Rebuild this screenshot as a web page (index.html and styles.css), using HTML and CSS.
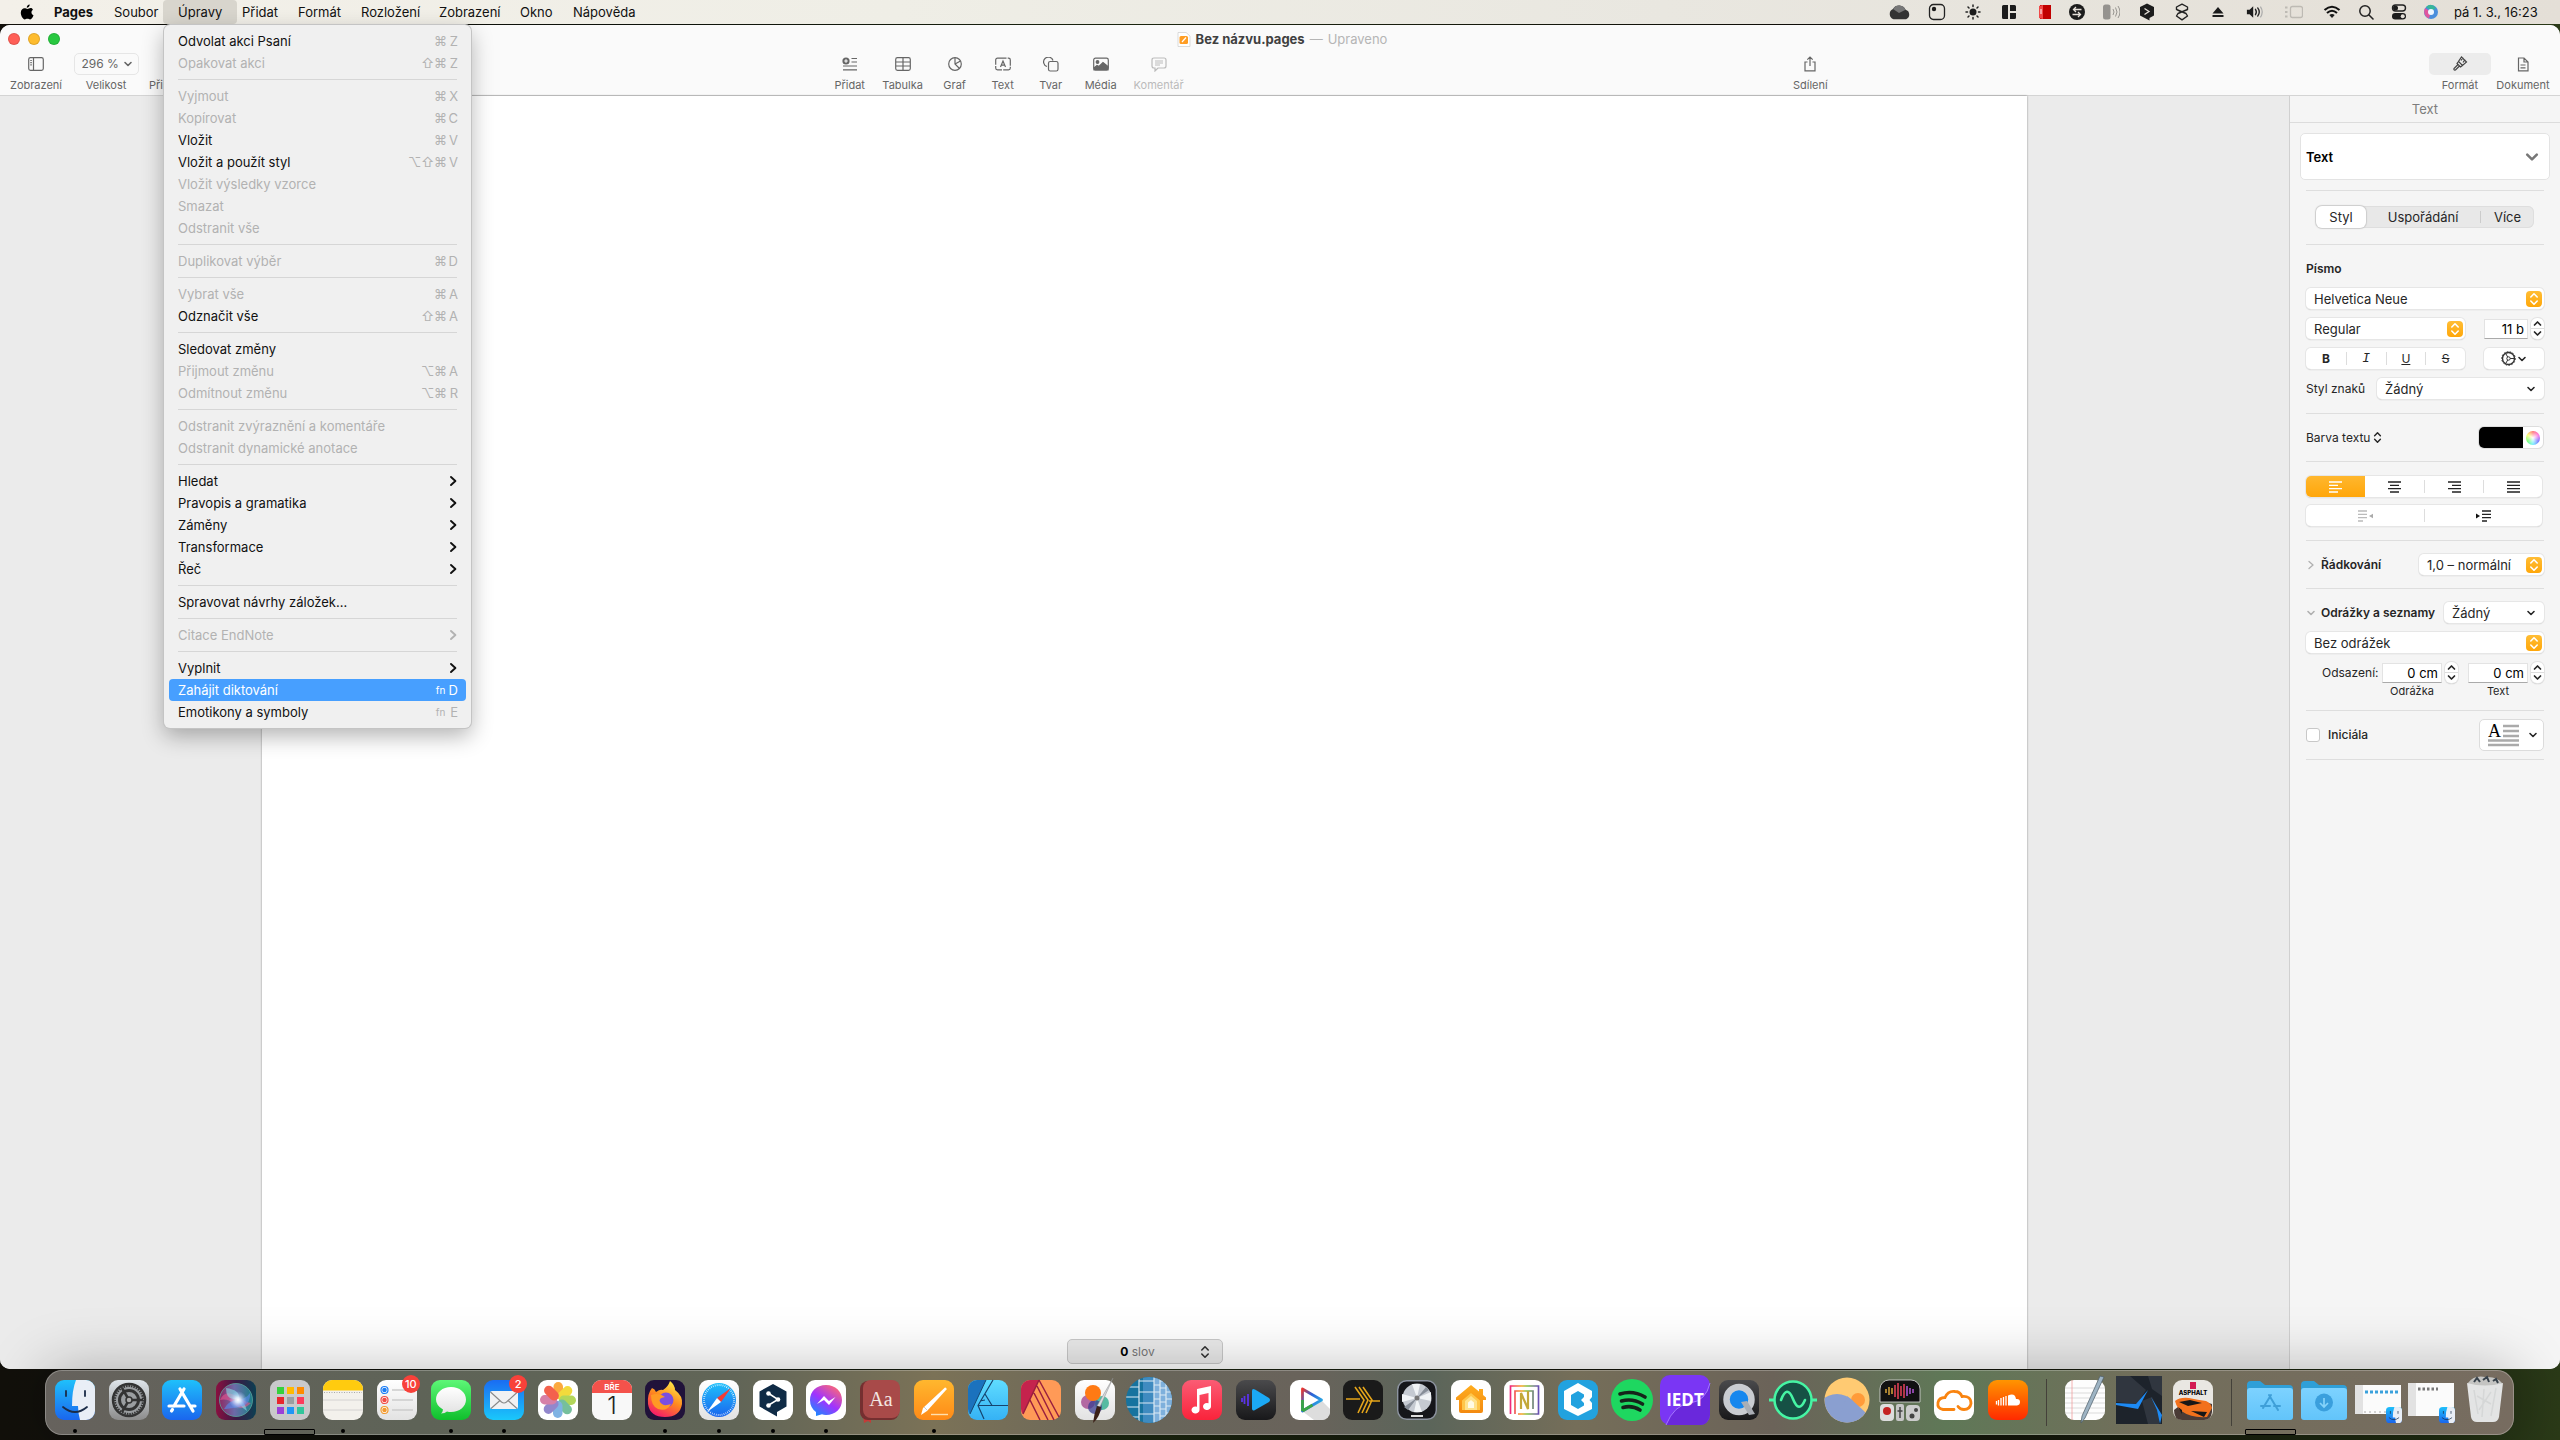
FILE: index.html
```html
<!DOCTYPE html>
<html lang="cs">
<head>
<meta charset="utf-8">
<title>Bez názvu.pages</title>
<link rel="stylesheet" href="styles.css">
</head>
<body>
<svg class="defs" aria-hidden="true">
  <defs>
    <linearGradient id="blue" x1="0" y1="0" x2="0" y2="1"><stop offset="0" stop-color="#1fc0fb"/><stop offset="1" stop-color="#1a66ee"/></linearGradient>
    <linearGradient id="blueUp" x1="0" y1="0" x2="0" y2="1"><stop offset="0" stop-color="#1a6cf2"/><stop offset="1" stop-color="#1ac8fb"/></linearGradient>
    <linearGradient id="silver" x1="0" y1="0" x2="0" y2="1"><stop offset="0" stop-color="#dfe5ea"/><stop offset="1" stop-color="#8c8c8c"/></linearGradient>
    <linearGradient id="white" x1="0" y1="0" x2="0" y2="1"><stop offset="0" stop-color="#fff"/><stop offset="1" stop-color="#e2e2e2"/></linearGradient>
    <linearGradient id="green" x1="0" y1="0" x2="0" y2="1"><stop offset="0" stop-color="#5df777"/><stop offset="1" stop-color="#0fbf2c"/></linearGradient>
    <linearGradient id="red" x1="0" y1="0" x2="0" y2="1"><stop offset="0" stop-color="#fb5c74"/><stop offset="1" stop-color="#fa233b"/></linearGradient>
    <linearGradient id="orange" x1="0" y1="0" x2="0" y2="1"><stop offset="0" stop-color="#ffb72e"/><stop offset="1" stop-color="#ff8a17"/></linearGradient>
    <linearGradient id="cloudOrange" x1="0" y1="0" x2="0" y2="1"><stop offset="0" stop-color="#ff9500"/><stop offset="1" stop-color="#ff2a00"/></linearGradient>
    <linearGradient id="dark" x1="0" y1="0" x2="0" y2="1"><stop offset="0" stop-color="#4a4a4c"/><stop offset="1" stop-color="#18181a"/></linearGradient>
    <linearGradient id="messenger" x1=".1" y1="1" x2=".8" y2="0"><stop offset="0" stop-color="#0a93ff"/><stop offset=".5" stop-color="#a033ff"/><stop offset="1" stop-color="#ff6a72"/></linearGradient>
    <linearGradient id="fire" x1=".8" y1="0" x2=".3" y2="1"><stop offset="0" stop-color="#fff04a"/><stop offset=".5" stop-color="#ff8a1e"/><stop offset="1" stop-color="#f5196b"/></linearGradient>
    <linearGradient id="rainbow" x1="0" y1="0" x2="1" y2="0"><stop offset="0" stop-color="#f0297c"/><stop offset=".4" stop-color="#f5a623"/><stop offset=".6" stop-color="#7dc242"/><stop offset="1" stop-color="#6a52b3"/></linearGradient>
    <linearGradient id="play" x1="0" y1="0" x2="1" y2=".8"><stop offset="0" stop-color="#e8352e"/><stop offset=".4" stop-color="#2c5fd6"/><stop offset="1" stop-color="#28b7e8"/></linearGradient>
    <linearGradient id="folder" x1="0" y1="0" x2="0" y2="1"><stop offset="0" stop-color="#7dd2ff"/><stop offset="1" stop-color="#62c4fa"/></linearGradient>
    <linearGradient id="affinity" x1="0" y1="0" x2="0" y2="1"><stop offset="0" stop-color="#5fdcff"/><stop offset="1" stop-color="#35b2f5"/></linearGradient>
    <linearGradient id="home" x1="0" y1="0" x2="0" y2="1"><stop offset="0" stop-color="#ffad1f"/><stop offset="1" stop-color="#f38a10"/></linearGradient>
    <radialGradient id="siriGlow" cx=".5" cy=".5" r=".5"><stop offset="0" stop-color="#fff"/><stop offset=".3" stop-color="#e6f4ff" stop-opacity=".85"/><stop offset="1" stop-color="#9fc6ff" stop-opacity="0"/></radialGradient>
    <linearGradient id="siri"><stop offset="0" stop-color="#8e2a64"/><stop offset=".45" stop-color="#6c6aa8"/><stop offset="1" stop-color="#1c7f88"/></linearGradient>
    <linearGradient id="siriBack"><stop offset="0" stop-color="#8a1040"/><stop offset=".5" stop-color="#3b1945"/><stop offset="1" stop-color="#0b3f52"/></linearGradient>
    <symbol id="tile" viewBox="0 0 40 40"><rect width="40" height="40" rx="9"/></symbol>
    <symbol id="down" viewBox="0 0 10 10"><path d="M2 3.500 5 6.500 8 3.500" fill="none" stroke="currentColor" stroke-width="1.600" stroke-linecap="round" stroke-linejoin="round"/></symbol>
    <symbol id="updown" viewBox="0 0 10 14"><path d="M1.800 5 5 1.800 8.200 5M1.800 9 5 12.200 8.200 9" fill="none" stroke="currentColor" stroke-width="1.600" stroke-linecap="round" stroke-linejoin="round"/></symbol>
    <symbol id="steps" viewBox="0 0 9 17"><path d="M1.500 5 4.500 2 7.500 5M1.500 12l3 3 3-3" fill="none" stroke="currentColor" stroke-width="1.700" stroke-linecap="round" stroke-linejoin="round"/></symbol>
    <symbol id="next" viewBox="0 0 10 12"><path d="M3 2 7.400 6 3 10" fill="none" stroke="currentColor" stroke-width="1.900" stroke-linecap="round" stroke-linejoin="round"/></symbol>
    <symbol id="thin" viewBox="0 0 10 12"><path d="M3 2.500 7 6 3 9.500" fill="none" stroke="currentColor" stroke-width="1.300" stroke-linecap="round" stroke-linejoin="round"/></symbol>
    <symbol id="finder" viewBox="0 0 40 40"><rect width="40" height="40" rx="9" fill="url(#blue)"/><path d="M21 0h10a9 9 0 0 1 9 9v22a9 9 0 0 1-9 9h-6q-2-7-2-14h-6q0-16 4-26z" fill="#e9eef6"/><path d="M11 11v5M30 11v5M8 27q12 10 24 0" fill="none" stroke="#1b2c48" stroke-width="1.800" stroke-linecap="round"/></symbol>
  </defs>
</svg>

<header class="menubar">
  <nav class="menus" aria-label="Hlavní menu">
    <button class="apple" aria-label="Apple"><svg width="14" height="17" viewBox="0 0 14 17"><path d="M9.700.5c.1 1.600-1.300 3.200-2.900 3.200C6.600 2.200 8.100.6 9.700.5zM12.900 5.800c-2.200 1.500-1.700 4.500.6 5.500-.6 1.800-1.900 4.100-3.400 4.100-1 0-1.400-.6-2.700-.6s-1.700.6-2.600.6C3 15.400.8 11.800.8 8.800c0-3 1.900-4.600 3.700-4.600 1.200 0 2 .7 3 .7.800 0 1.800-.8 3.200-.8 1 0 1.800.6 2.200 1.700z"/></svg></button>
    <button class="app">Pages</button>
    <button>Soubor</button>
    <div class="opened">
      <button aria-expanded="true">Úpravy</button>
      <ul class="menu">
        <li><button>Odvolat akci Psaní<kbd><i>⌘</i><b>Z</b></kbd></button></li>
        <li><button disabled>Opakovat akci<kbd><i>⇧</i><i>⌘</i><b>Z</b></kbd></button></li>
        <li class="rule"></li>
        <li><button disabled>Vyjmout<kbd><i>⌘</i><b>X</b></kbd></button></li>
        <li><button disabled>Kopírovat<kbd><i>⌘</i><b>C</b></kbd></button></li>
        <li><button>Vložit<kbd><i>⌘</i><b>V</b></kbd></button></li>
        <li><button>Vložit a použít styl<kbd><i>⌥</i><i>⇧</i><i>⌘</i><b>V</b></kbd></button></li>
        <li><button disabled>Vložit výsledky vzorce</button></li>
        <li><button disabled>Smazat</button></li>
        <li><button disabled>Odstranit vše</button></li>
        <li class="rule"></li>
        <li><button disabled>Duplikovat výběr<kbd><i>⌘</i><b>D</b></kbd></button></li>
        <li class="rule"></li>
        <li><button disabled>Vybrat vše<kbd><i>⌘</i><b>A</b></kbd></button></li>
        <li><button>Odznačit vše<kbd><i>⇧</i><i>⌘</i><b>A</b></kbd></button></li>
        <li class="rule"></li>
        <li><button>Sledovat změny</button></li>
        <li><button disabled>Přijmout změnu<kbd><i>⌥</i><i>⌘</i><b>A</b></kbd></button></li>
        <li><button disabled>Odmítnout změnu<kbd><i>⌥</i><i>⌘</i><b>R</b></kbd></button></li>
        <li class="rule"></li>
        <li><button disabled>Odstranit zvýraznění a komentáře</button></li>
        <li><button disabled>Odstranit dynamické anotace</button></li>
        <li class="rule"></li>
        <li><button>Hledat<svg><use href="#next"/></svg></button></li>
        <li><button>Pravopis a gramatika<svg><use href="#next"/></svg></button></li>
        <li><button>Záměny<svg><use href="#next"/></svg></button></li>
        <li><button>Transformace<svg><use href="#next"/></svg></button></li>
        <li><button>Řeč<svg><use href="#next"/></svg></button></li>
        <li class="rule"></li>
        <li><button>Spravovat návrhy záložek…</button></li>
        <li class="rule"></li>
        <li><button disabled>Citace EndNote<svg><use href="#next"/></svg></button></li>
        <li class="rule"></li>
        <li><button>Vyplnit<svg><use href="#next"/></svg></button></li>
        <li><button class="active">Zahájit diktování<kbd class="fn"><i>fn</i><b>D</b></kbd></button></li>
        <li><button>Emotikony a symboly<kbd class="fn"><i>fn</i><b>E</b></kbd></button></li>
      </ul>
    </div>
    <button>Přidat</button>
    <button>Formát</button>
    <button>Rozložení</button>
    <button>Zobrazení</button>
    <button>Okno</button>
    <button>Nápověda</button>
  </nav>
  <div class="status">
    <svg viewBox="0 0 20 16"><path d="M5 14.500a5 5 0 0 1-.5-9.300A6.500 6.500 0 0 1 16 6a4.500 4.500 0 0 1 .5 8.500z" fill="#333"/><path d="M4.500 5.200A6.500 6.500 0 0 1 16 6l-6 3z" fill="#777"/></svg>
    <svg viewBox="0 0 18 18"><rect x="1.500" y="1.500" width="15" height="15" rx="4" fill="none" stroke="#222" stroke-width="1.300"/><circle cx="6" cy="6" r="2.200"/></svg>
    <svg viewBox="0 0 18 18"><circle cx="9" cy="9" r="3.500"/><path d="M9 2v1.500M9 14.500V16M2 9h1.500M14.500 9H16M4 4l1 1M13 13l1 1M4 14l1-1M13 5l1-1" stroke="#222" stroke-width="1.500" stroke-linecap="round"/></svg>
    <svg viewBox="0 0 18 18"><path d="M3.500 2H8v14H3.500A1.500 1.500 0 0 1 2 14.500v-11A1.500 1.500 0 0 1 3.500 2zM10 2h4.500A1.500 1.500 0 0 1 16 3.500V8h-6zM10 10h6v4.500a1.500 1.500 0 0 1-1.500 1.500H10z"/></svg>
    <svg viewBox="0 0 18 18"><path d="M4 2h11v14H4z" fill="#c10000"/><path d="M3 3l4-1v14l-4-1z" fill="#f04848"/><path d="M5 6v5" stroke="#fff"/></svg>
    <svg viewBox="0 0 18 18"><circle cx="9" cy="9" r="8"/><path d="M13.500 6.500H5.500m2.500-2.500-2.500 2.500 2.500 2.500M4.500 11.500h8m-2.500-2.500 2.500 2.500-2.500 2.500" stroke="#e5e0d9" fill="none" stroke-width="1.300"/></svg>
    <svg viewBox="0 0 18 18" class="dim"><rect x="1" y="1.500" width="7.500" height="15" rx="2.500"/><path d="M11 6q2 3 0 6M13.500 4.500q3 4.500 0 9M16 3q4 6 0 12" fill="none" stroke="#222"/></svg>
    <svg viewBox="0 0 18 18"><path d="M9 .5 16 4v8.500L11.500 15v2.500L2 12.500V4z"/><path d="M6.500 5.500 11 8.500 6.500 11.500" fill="none" stroke="#e5e0d9" stroke-width="1.300"/></svg>
    <svg viewBox="0 0 18 18"><path d="M9 9.500 3.500 6.500V4L9 1.200 14.500 4v2.500L5 10.500 3.500 13 9 16.800 14.500 13 13 10.500 3.500 6.500" fill="none" stroke="#222" stroke-width="1.400" stroke-linejoin="round"/></svg>
    <svg viewBox="0 0 18 18"><path d="M9 4 14.500 10.500h-11zM3.500 12h11v2h-11z"/></svg>
    <svg viewBox="0 0 20 18"><path d="M1 6.500h3l4-4v13l-4-4H1z"/><path d="M10.500 6q2 3 0 6M13 4.500q3.500 4.500 0 9" fill="none" stroke="#222" stroke-width="1.500" stroke-linecap="round"/><path d="M16 3q4 6 0 12" fill="none" stroke="#aaa" stroke-width="1.300"/></svg>
    <svg viewBox="0 0 18 18" class="faint"><rect x="5.500" y="3.500" width="12" height="11" rx="2" fill="none" stroke="#222" stroke-width="1.300"/><path d="M0 4.500h2.500M0 9h2.500M0 13.500h2.500" stroke="#222" stroke-width="2"/></svg>
    <svg viewBox="0 0 18 16"><path d="M1.500 6q7.500-6.500 15 0M4 9q5-4.500 10 0" fill="none" stroke="#111" stroke-width="2.100"/><path d="M6.300 11q2.700-2.200 5.400 0L9 14z"/></svg>
    <svg viewBox="0 0 18 18"><circle cx="8" cy="8" r="5.200" fill="none" stroke="#222" stroke-width="1.500"/><path d="m12 12 4 4" stroke="#222" stroke-width="1.600" stroke-linecap="round"/></svg>
    <svg viewBox="0 0 18 18"><rect x="2.500" y="2" width="13" height="6" rx="3" fill="none" stroke="#222" stroke-width="1.400"/><circle cx="5.500" cy="5" r="2.500"/><rect x="2" y="10" width="14" height="6.500" rx="3.200"/><circle cx="12.700" cy="13.200" r="2" fill="#e5e0d9"/></svg>
    <svg viewBox="0 0 18 18"><circle cx="9" cy="9" r="7" fill="#4b8edc"/><path d="M4 4q5-5 10 1l-4 3z" fill="#37b69a"/><path d="M3 5q-3 7 4 10.500L9 9z" fill="#e0559d"/><circle cx="9" cy="9" r="3" fill="#eef6ff"/></svg>
    <time>pá 1. 3., 16:23</time>
  </div>
</header>

<main class="window">
  <header class="chrome">
    <div class="titlebar">
      <div class="lights"><button aria-label="Zavřít"></button><button aria-label="Minimalizovat"></button><button aria-label="Celá obrazovka"></button></div>
      <h1><svg width="14" height="15" viewBox="0 0 14 15"><path d="M1 .5h8L13 4v10.500H1z" fill="#fff" stroke="#ccc" stroke-width=".7"/><rect x="2.500" y="4" width="8.500" height="8" rx="1.500" fill="#ff9d23"/><path d="m5 10 4-4.500" stroke="#fff" stroke-width="1.200"/></svg>Bez názvu.pages<span>—</span><span>Upraveno</span></h1>
    </div>
    <div class="toolbar">
      <div class="tools left">
        <button><svg width="16" height="14" viewBox="0 0 16 14"><rect x=".7" y=".7" width="14.600" height="12.600" rx="1.800"/><path d="M5.500 1v12M2.300 3.500h1.500M2.300 5.700h1.500M2.300 7.900h1.500"/></svg>Zobrazení</button>
        <label><span class="zoom"><select aria-label="Velikost"><option>296 %</option></select><svg width="10" height="10"><use href="#down"/></svg></span>Velikost</label>
        <button>Přidat stránku</button>
      </div>
      <div class="tools insert">
        <button><svg width="16" height="14" viewBox="0 0 16 14"><circle cx="4" cy="4" r="3.600" fill="#666" stroke="none"/><path d="M4 2.200v3.600M2.200 4h3.600" stroke="#fafafa"/><path d="M9.500 1.500H15M9.500 5H15M1 9h14M1 12.800h14"/></svg>Přidat</button>
        <button><svg width="16" height="14" viewBox="0 0 16 14"><rect x=".7" y=".7" width="14.600" height="12.600" rx="1.800"/><path d="M1 5h14M1 9h14M8 1v12"/></svg>Tabulka</button>
        <button><svg width="14" height="14" viewBox="0 0 14 14"><circle cx="7" cy="7" r="6.300"/><path d="M7 .7V7l4.500 4.500M7 7l5.500-3"/></svg>Graf</button>
        <button><svg width="16" height="14" viewBox="0 0 16 14"><rect x=".7" y="1.200" width="14.600" height="11.600" rx="1.800" stroke-dasharray="9 1.200"/><path d="M5.500 10 8 4l2.500 6M6.300 8.200h3.400"/></svg>Text</button>
        <button><svg width="16" height="15" viewBox="0 0 16 15"><path d="M4 9.500A4.800 4.800 0 1 1 10 3.500"/><rect x="5.500" y="4.500" width="9.500" height="9.500" rx="1.800" fill="#fafafa"/></svg>Tvar</button>
        <button><svg width="16" height="14" viewBox="0 0 16 14"><rect x=".7" y="1.200" width="14.600" height="11.600" rx="1.800"/><circle cx="4.500" cy="5" r="1.300" fill="#666"/><path d="m1 11 3-2.500 2 1 4-4 5 4V13H1z" fill="#666"/></svg>Média</button>
        <button disabled><svg width="16" height="15" viewBox="0 0 16 15"><path d="M3 1h10q2 0 2 2v6q0 2-2 2H7l-3 3v-3H3q-2 0-2-2V3q0-2 2-2zM4 4h8M4 6h8M4 8h5"/></svg>Komentář</button>
      </div>
      <div class="tools share"><button><svg width="14" height="16" viewBox="0 0 14 16"><path d="M4.500 6H2v8.800h10V6H9.500M7 10V1M4.300 3.700 7 1l2.700 2.700"/></svg>Sdílení</button></div>
      <div class="tools right">
        <button aria-pressed="true"><span class="pressed"><svg width="16" height="16" viewBox="0 0 16 16"><path d="m9.500 1 5 5-4 3.500-4-4zM6.500 5.500l-1.500 2 3.500 3.500 2-1.500M6 8.500 2 12.500q-.5 2 1.500 1.500l4-4M11 1.500l-2 3M13 3.500l-2 3"/></svg></span>Formát</button>
        <button><svg width="14" height="15" viewBox="0 0 14 15"><path d="M2.500 1h5.500l4 4v8.800h-9.500zM8 1v4h4M4.500 8h5M4.500 10.800h5"/></svg>Dokument</button>
      </div>
    </div>
  </header>

  <div class="content">
    <section class="canvas">
      <article class="page">
        <button class="count"><span><b>0</b> slov</span><svg width="10" height="14"><use href="#updown"/></svg></button>
      </article>
    </section>

    <aside class="inspector">
      <h2>Text</h2>
      <section class="top"><button class="style">Text<svg width="16" height="16"><use href="#down"/></svg></button></section>
      <section class="tabs-section"><div class="tabs"><button class="on">Styl</button><button>Uspořádání</button><button>Více</button></div></section>
      <section class="font">
        <h3>Písmo</h3>
        <div class="pop"><select aria-label="Písmo"><option>Helvetica Neue</option></select><svg class="knob"><use href="#updown" x="3" y="1" width="10" height="14"/></svg></div>
        <div class="row size">
          <div class="pop"><select aria-label="Řez"><option>Regular</option></select><svg class="knob"><use href="#updown" x="3" y="1" width="10" height="14"/></svg></div>
          <input aria-label="Velikost písma" value="11 b"><span class="step"><button aria-label="Zvětšit"></button><button aria-label="Zmenšit"></button><svg><use href="#steps"/></svg></span>
        </div>
        <div class="row bius">
          <div class="seg"><button><b>B</b></button><button><i>I</i></button><button><u>U</u></button><button><s>S</s></button></div>
          <button class="gear" aria-label="Další volby"><svg width="15" height="15" viewBox="0 0 15 15"><circle cx="7.500" cy="7.500" r="6" fill="none" stroke="#333" stroke-width="1.400"/><circle cx="7.500" cy="7.500" r="6.800" fill="none" stroke="#333" stroke-dasharray="1.600 1.400"/><path d="M7.500 7.500H13M7.500 7.500 5 3M7.500 7.500 5 12" stroke="#333"/><circle cx="7.500" cy="7.500" r="1.700" fill="#fff" stroke="#333"/></svg><svg width="10" height="10"><use href="#down"/></svg></button>
        </div>
        <div class="row chars"><label for="cs">Styl znaků</label><div class="pop"><select id="cs"><option>Žádný</option></select><svg class="arrow"><use href="#down"/></svg></div></div>
      </section>
      <section class="color"><div class="row"><button class="plain">Barva textu<svg width="9" height="13"><use href="#updown"/></svg></button><button class="well" aria-label="Barva textu"><span></span></button></div></section>
      <section class="align">
        <div class="seg four">
          <button class="on" aria-label="Vlevo"><svg viewBox="0 0 13 12"><path d="M0 1h13M0 4.300h9M0 7.600h13M0 11h9"/></svg></button>
          <button aria-label="Na střed"><svg viewBox="0 0 13 12"><path d="M0 1h13M2 4.300h9M0 7.600h13M2 11h9"/></svg></button>
          <button aria-label="Vpravo"><svg viewBox="0 0 13 12"><path d="M0 1h13M4 4.300h9M0 7.600h13M4 11h9"/></svg></button>
          <button aria-label="Do bloku"><svg viewBox="0 0 13 12"><path d="M0 1h13M0 4.300h13M0 7.600h13M0 11h13"/></svg></button>
        </div>
        <div class="seg two">
          <button disabled aria-label="Zmenšit odsazení"><svg viewBox="0 0 15 12"><path d="M0 1h9M0 4.300h9M0 7.600h9M0 11h5"/><path d="m15 3.800-4 2.200 4 2.200z" fill="#aaa" stroke="none"/></svg></button>
          <button aria-label="Zvětšit odsazení"><svg viewBox="0 0 15 12"><path d="M6 1h9M6 4.300h9M6 7.600h9M6 11h5"/><path d="m0 3.500 4 2.500-4 2.500z" fill="#111" stroke="none"/></svg></button>
        </div>
      </section>
      <section class="spacing"><div class="row"><button class="fold"><svg><use href="#thin"/></svg>Řádkování</button><div class="pop"><select aria-label="Řádkování"><option>1,0 – normální</option></select><svg class="knob"><use href="#updown" x="3" y="1" width="10" height="14"/></svg></div></div></section>
      <section class="lists">
        <div class="row"><button class="fold"><svg><use href="#down"/></svg>Odrážky a seznamy</button><div class="pop"><select aria-label="Styl seznamu"><option>Žádný</option></select><svg class="arrow"><use href="#down"/></svg></div></div>
        <div class="pop"><select aria-label="Druh odrážek"><option>Bez odrážek</option></select><svg class="knob"><use href="#updown" x="3" y="1" width="10" height="14"/></svg></div>
        <div class="indent">
          <span>Odsazení:</span>
          <input id="i1" value="0 cm"><span class="step"><button aria-label="Více"></button><button aria-label="Méně"></button><svg><use href="#steps"/></svg></span>
          <input id="i2" value="0 cm"><span class="step"><button aria-label="Více"></button><button aria-label="Méně"></button><svg><use href="#steps"/></svg></span>
          <label class="first" for="i1">Odrážka</label><label class="second" for="i2">Text</label>
        </div>
      </section>
      <section class="initial"><div class="row"><label><input type="checkbox">Iniciála</label><button aria-label="Styl iniciály"><svg width="31" height="24" viewBox="0 0 31 24"><text x="0" y="14" font-family="Liberation Serif, serif" font-size="18">A</text><path d="M15 3h16M15 8h16M15 13h16M0 17.500h31M0 22h31" stroke="#aaa" stroke-width="2.400"/></svg><svg width="10" height="10"><use href="#down"/></svg></button></div></section>
    </aside>
  </div>
</main>

<nav class="dock" aria-label="Dock">
  <a href="#" class="run" aria-label="Finder"><svg viewBox="0 0 40 40"><use href="#finder"/></svg></a>
  <a href="#" aria-label="Nastavení"><svg viewBox="0 0 40 40"><use href="#tile" fill="url(#silver)"/><circle cx="20" cy="20" r="16" fill="#9a9da0" stroke="#333" stroke-width="2.500"/><circle cx="20" cy="20" r="14" fill="none" stroke="#333" stroke-width="2" stroke-dasharray="1.500 1"/><circle cx="20" cy="20" r="9.500" fill="none" stroke="#333" stroke-width="3"/><path d="M20 20h14M20 20 13 8M20 20l-7 12" stroke="#333" stroke-width="2.500"/><circle cx="20" cy="20" r="3" fill="#aaa" stroke="#333" stroke-width="1.500"/></svg></a>
  <a href="#" aria-label="App Store"><svg viewBox="0 0 40 40"><use href="#tile" fill="url(#blue)"/><path d="M22 9 12 26M9.500 31l1-1.500M18 9l13 22M7 26h15M28 26h5" stroke="#fff" stroke-width="3.200" stroke-linecap="round"/></svg></a>
  <a href="#" aria-label="Siri"><svg viewBox="0 0 40 40"><use href="#tile" fill="url(#siriBack)"/><circle cx="20" cy="20" r="16.500" fill="url(#siri)" stroke="#5ba39b" stroke-width=".8"/><path d="M4 20q5-11 16-4t15 7q-9 9-16 2T4 20z" fill="#e9558f" opacity=".6"/><path d="M10 8q14 2 13 10t8 13q-3-13-12-12T10 8z" fill="#8be9ed" opacity=".55"/><path d="M8 29q4-8 13-9t13-7q1 12-11 14T8 29z" fill="#5a8cf0" opacity=".6"/><circle cx="22" cy="20" r="9" fill="url(#siriGlow)"/></svg></a>
  <a href="#" class="box" aria-label="Launchpad"><svg viewBox="0 0 40 40"><use href="#tile" fill="#c9c9cb"/><path d="M7 7h7v7H7z" fill="#35d13c"/><path d="M17 7h7v7h-7z" fill="#ffb900"/><path d="M27 7h7v7h-7z" fill="#ff8a00"/><path d="M7 17h7v7H7z" fill="#e8262d"/><path d="M17 17h7v7h-7z" fill="#9b9ea1"/><path d="M27 17h7v7h-7z" fill="#fc3c5c"/><path d="M7 27h7v7H7z" fill="#9b40d8"/><path d="M17 27h7v7h-7z" fill="#2196f5"/><path d="M27 27h7v7h-7z" fill="#31c69b"/></svg></a>
  <a href="#" class="run" aria-label="Poznámky"><svg viewBox="0 0 40 40"><use href="#tile" fill="#f3f1ec"/><path d="M0 10.500V9a9 9 0 0 1 9-9h22a9 9 0 0 1 9 9v1.500z" fill="#ffcb0f"/><path d="M0 20h40M0 30h40" stroke="#ccc" stroke-width=".8"/><path d="M1 12.500h38" stroke="#aaa" stroke-dasharray="1 1.500"/></svg></a>
  <a href="#" aria-label="Připomínky"><svg viewBox="0 0 40 40"><use href="#tile" fill="url(#white)"/><path d="M15 10h21M15 20h21M15 30h21" stroke="#ccc" stroke-width="1.300"/><g stroke-width="1.200" fill="#fff"><circle cx="7.500" cy="10" r="3.500" stroke="#1b7df5"/><circle cx="7.500" cy="20" r="3.500" stroke="#f24b44"/><circle cx="7.500" cy="30" r="3.500" stroke="#f29a2e"/></g><circle cx="7.500" cy="10" r="2.300" fill="#1b7df5"/><circle cx="7.500" cy="20" r="2.300" fill="#f24b44"/><circle cx="7.500" cy="30" r="2.300" fill="#f29a2e"/></svg><b>10</b></a>
  <a href="#" class="run" aria-label="Zprávy"><svg viewBox="0 0 40 40"><use href="#tile" fill="url(#green)"/><path d="M20 7c8.500 0 15 5.500 15 12.500S28.500 32 20 32q-2 0-4-.5-2 2-6 2 2-2 2-4-7-4-7-10C5 12.500 11.500 7 20 7z" fill="url(#white)"/></svg></a>
  <a href="#" class="run" aria-label="Mail"><svg viewBox="0 0 40 40"><use href="#tile" fill="url(#blueUp)"/><rect x="6" y="11" width="28" height="18" rx="2" fill="#f0f1f3"/><path d="m6.500 12 11 10q2.500 2 5 0l11-10M7 28.500l9-8M33 28.500l-9-8" fill="none" stroke="#888" stroke-width="1.100"/></svg><b>2</b></a>
  <a href="#" aria-label="Fotky"><svg viewBox="0 0 40 40"><use href="#tile" fill="#fff"/><g opacity=".85"><rect x="15.500" y="2" width="9.500" height="17" rx="4.700" fill="#fb9b1e"/><rect x="15.500" y="2" width="9.500" height="17" rx="4.700" fill="#f2d41b" transform="rotate(45 20 20)"/><rect x="15.500" y="2" width="9.500" height="17" rx="4.700" fill="#a6cf3e" transform="rotate(90 20 20)"/><rect x="15.500" y="2" width="9.500" height="17" rx="4.700" fill="#5fb58b" transform="rotate(135 20 20)"/><rect x="15.500" y="2" width="9.500" height="17" rx="4.700" fill="#6ba6df" transform="rotate(180 20 20)"/><rect x="15.500" y="2" width="9.500" height="17" rx="4.700" fill="#8073c4" transform="rotate(225 20 20)"/><rect x="15.500" y="2" width="9.500" height="17" rx="4.700" fill="#cf6a98" transform="rotate(270 20 20)"/><rect x="15.500" y="2" width="9.500" height="17" rx="4.700" fill="#f2462e" transform="rotate(315 20 20)"/></g></svg></a>
  <a href="#" aria-label="Kalendář"><svg viewBox="0 0 40 40"><use href="#tile" fill="#f8f8f8"/><path d="M0 13V9a9 9 0 0 1 9-9h22a9 9 0 0 1 9 9v4z" fill="#f4524b"/><text x="20" y="10" font-size="8" font-weight="600" fill="#fff" text-anchor="middle">BŘE</text><text x="20" y="34" font-size="24" font-weight="300" fill="#222" text-anchor="middle">1</text></svg></a>
  <a href="#" class="run" aria-label="Firefox"><svg viewBox="0 0 40 40"><use href="#tile" fill="#20123a"/><path d="M7 8q3 1 4 4 4-3 7-2 5-3 7-9 5 4 5 9 8 6 7 14-2 13-17 13T3 24Q2 14 7 8z" fill="url(#fire)"/><circle cx="21" cy="20" r="7.500" fill="#7a4fe0"/><path d="M6 15q8-3 14 2-7 1-5 5 3 5 11 2-4 8-13 5-7-3-7-14z" fill="#ff9a24"/></svg></a>
  <a href="#" class="run" aria-label="Safari"><svg viewBox="0 0 40 40"><use href="#tile" fill="url(#white)"/><circle cx="20" cy="20" r="17" fill="url(#blue)"/><circle cx="20" cy="20" r="15" fill="none" stroke="#fff" stroke-width="2" stroke-dasharray=".6 1.400"/><path d="M32 8 22 22l-4-4z" fill="#f23b36"/><path d="M8 32l10-14 4 4z" fill="#fff"/></svg></a>
  <a href="#" class="run" aria-label="DeepL"><svg viewBox="0 0 40 40"><use href="#tile" fill="#fff"/><path d="m20 4 13.500 7.500v15L24 32v4.500L6.500 26.500v-15z" fill="#0f2b46"/><path d="m15 13 10 6.500-10 6" fill="none" stroke="#fff" stroke-width="1.500"/><circle cx="15.500" cy="13.500" r="2.300" fill="#fff"/><circle cx="25" cy="19.500" r="2.300" fill="#fff"/><circle cx="15.500" cy="25.500" r="2.300" fill="#fff"/></svg></a>
  <a href="#" class="run" aria-label="Messenger"><svg viewBox="0 0 40 40"><use href="#tile" fill="#fff"/><path d="M20 5c9.500 0 16 6.500 16 15s-6.500 15-16 15q-2.500 0-4-.7L10 36v-4q-6-4.500-6-12C4 11.500 10.500 5 20 5z" fill="url(#messenger)"/><path d="m11 24 7-8 5 5 6.500-4L23 25l-5-5z" fill="#fff"/></svg></a>
  <a href="#" aria-label="Slovník"><svg viewBox="0 0 40 40"><path d="M3 35h8v8l-3-2-4 2z" fill="#c43b38"/><rect y="1" width="39" height="39" rx="8" fill="#742f30"/><rect x="3" width="37" height="38" rx="8" fill="#a84a49"/><text x="21" y="26" font-family="Liberation Serif, serif" font-size="20" fill="#f3e6e2" text-anchor="middle">Aa</text></svg></a>
  <a href="#" class="run" aria-label="Pages"><svg viewBox="0 0 40 40"><use href="#tile" fill="url(#orange)"/><path d="M17 34.500h17" stroke="#ffdfae" stroke-width="1.400"/><path d="M31 7.500q2 0 1.500 2L13 31l-6 4 2-7z" fill="#fff"/><path d="m10 27 3 3" stroke="#ccc"/></svg></a>
  <a href="#" aria-label="Affinity Designer"><svg viewBox="0 0 40 40"><use href="#tile" fill="url(#affinity)"/><path d="M9 0h9L2 34q-2-2-2-5V9a9 9 0 0 1 9-9z" fill="#1b72bd"/><path d="M25 0 10 25.500 16 39M17 14l7 11.500M10 25.500h30M12 21l5-1" fill="none" stroke="#16446f" stroke-width="1.200"/><path d="M18 0 2 34" stroke="#16446f"/></svg></a>
  <a href="#" aria-label="Affinity Publisher"><svg viewBox="0 0 40 40"><use href="#tile" fill="#ff9a57"/><path d="M9 0h9L2 34q-2-2-2-5V9a9 9 0 0 1 9-9z" fill="#c5234d"/><path d="M18 0 2 34M18 0l20 37M16 6l17 34M13 13l14 27M9 20l10 20" stroke="#9a1f3f" stroke-width="1.500"/></svg></a>
  <a href="#" aria-label="Pixelmator Pro"><svg viewBox="0 0 40 40"><use href="#tile" fill="url(#white)"/><circle cx="13" cy="22" r="7" fill="#a4478f" opacity=".8"/><circle cx="27" cy="23" r="7" fill="#2fae8e" opacity=".8"/><circle cx="20" cy="27" r="7" fill="#3b3c8f" opacity=".75"/><circle cx="18" cy="13" r="8" fill="#ff7a14"/><path d="M38-2 25 27l-3-1z" fill="#d8dbe0" stroke="#888" stroke-width=".5"/><path d="m22 26 4 1q-1 10-8 16 1-9 4-17z" fill="#3b2018"/></svg></a>
  <a href="#" aria-label="Mřížka"><svg viewBox="0 0 40 40"><clipPath id="disc"><circle cx="20" cy="20" r="23"/></clipPath><g clip-path="url(#disc)"><path d="M-3-3h31v46H-3z" fill="#16739f"/><path d="M14-3h29v46H14z" fill="#3f8bc0"/><path d="M25-3h18v46H25z" fill="#7eb0dc"/><path d="M10-3v46M25-3v46M31-3v46M37-3v46M-3 7h13M-3 17h13M-3 27h13M-3 37h13M10 1h15M10 12h15M10 23h15M10 34h15M25 5h6M25 12h6M25 19h6M25 26h6M25 33h6M31 1h6M31 8h6M31 15h6M31 22h6M31 29h6M31 36h6M37 5h6M37 12h6M37 19h6M37 26h6M37 33h6" stroke="#dbeaf4" stroke-width="1.200"/></g></svg></a>
  <a href="#" aria-label="Hudba"><svg viewBox="0 0 40 40"><use href="#tile" fill="url(#red)"/><path d="m15 9 14-3v20.500a4 3.500 0 1 1-2.500-3.300V13l-9 2v15a4 3.500 0 1 1-2.500-3.300z" fill="#fff"/></svg></a>
  <a href="#" aria-label="Přehrávač"><svg viewBox="0 0 40 40"><use href="#tile" fill="url(#dark)"/><path d="M16 11q0-3 3-1.500l14 8.500q2 2 0 4l-14 8q-3 1.500-3-1.500z" fill="#1ba9f5"/><path d="M12 14v12M8.500 16v8M6 18v4" stroke="#5b34e8" stroke-width="1.800"/></svg></a>
  <a href="#" aria-label="Video"><svg viewBox="0 0 40 40"><use href="#tile" fill="#fff"/><path d="m32 21 8 8v3a8 8 0 0 1-8 8h-8L12 31z" fill="#ddd"/><path d="m12.500 9 19 11-19 11z" fill="#fff" stroke="url(#play)" stroke-width="2.800" stroke-linejoin="round"/><path d="M12.500 31V20M12.500 31l10-6" stroke="#3aa546" stroke-width="2.800"/></svg></a>
  <a href="#" aria-label="Plex"><svg viewBox="0 0 40 40"><use href="#tile" fill="#1a1a1a"/><path d="M3 19h14M26 21h11M12 7l9 13-6 13M16 7l9 13-6 13M20 7l9 13-6 13" fill="none" stroke="#e5a51a" stroke-width="1.600"/></svg></a>
  <a href="#" aria-label="Logic Pro"><svg viewBox="0 0 40 40"><rect x=".7" y=".7" width="38.600" height="38.600" rx="9" fill="#15161a" stroke="#8d94a0" stroke-width="1.400"/><circle cx="20" cy="18" r="14.500" fill="#c5cad2"/><path d="m20 18-5-14h8zM20 18l5 14h-8zM20 18 5 22v-8zM20 18l14-6v9z" fill="#f0f3f6"/><path d="m20 18-13 9 4 3zM20 18l9-11 3 3z" fill="#868d98"/><circle cx="20" cy="18" r="2.500" fill="#777"/><path d="M14 36h12" stroke="#ddd" stroke-width="2"/></svg></a>
  <a href="#" aria-label="Domácnost"><svg viewBox="0 0 40 40"><use href="#tile" fill="#fff"/><path d="M20 5 5 17.500V20h3v11q0 2 2 2h20q2 0 2-2V20h3v-2.500L32 15V9h-4v2.500z" fill="url(#home)"/><path d="m20 13 9 7.500V30H11v-9.500z" fill="#ffc64a"/><path d="m20 16 6 5v9H14v-9z" fill="#ffe28c"/><path d="m20 20 3 2.500V28h-6v-5.500z" fill="#fffbe6"/></svg></a>
  <a href="#" aria-label="N"><svg viewBox="0 0 40 40"><use href="#tile" fill="#fff"/><path d="M6.500 34V6h28v28H14M11 34V11h18v18" fill="none" stroke="url(#rainbow)" stroke-width="1.700"/><path d="M17 29V13l7 16V11" fill="none" stroke="#c3a83a" stroke-width="2.200"/></svg></a>
  <a href="#" aria-label="Bloky"><svg viewBox="0 0 40 40"><use href="#tile" fill="#22a2df"/><path d="m20 3 14 8v6l-2.500 3 2.500 3v6l-14 7-14-7V11zm0 8-7 4v10l7 4 6-3.500V23l-3-3 3-3v-2.500z" fill="#fff" fill-rule="evenodd"/></svg></a>
  <a href="#" aria-label="Spotify"><svg viewBox="0 0 40 40"><circle cx="20" cy="20" r="21" fill="#1ed760"/><path d="M8 14q13-4 25 3M9.500 21q11-3 21 3M11 27.500q9-2.500 17 2.500" fill="none" stroke="#15251a" stroke-width="3.600" stroke-linecap="round"/></svg></a>
  <a href="#" class="large" aria-label="IEDT"><svg viewBox="0 0 50 50"><rect width="50" height="50" rx="10" fill="#7a36f4"/><path d="M6 50Q14 30 30 28T50 8v32q-2 10-10 10z" fill="#6a28dc"/><path d="M6 50Q14 30 30 28T50 8" fill="none" stroke="#a478ff"/><text x="25" y="31" font-family="Open Sans, sans-serif" font-size="17" font-weight="700" fill="#fff" text-anchor="middle">IEDT</text></svg></a>
  <a href="#" aria-label="QuickTime"><svg viewBox="0 0 40 40"><use href="#tile" fill="url(#dark)"/><circle cx="20" cy="19.500" r="12.500" fill="#1687ee" stroke="#c9ccd1" stroke-width="6.500"/><path d="m22 22 6-1 8 13-6 1z" fill="#aaaeb5"/></svg></a>
  <a href="#" aria-label="Audio"><svg viewBox="0 0 40 40"><circle cx="20" cy="20" r="18.500" fill="#165145" stroke="#46f5a4" stroke-width="2.500"/><path d="M-4 20h5M39 20h5" stroke="#46f5a4" stroke-width="3"/><path d="M8 20q6-16 12-1t12 1" fill="none" stroke="#46f5a4" stroke-width="2.600" stroke-linecap="round"/></svg></a>
  <a href="#" aria-label="Počasí"><svg viewBox="0 0 40 40"><clipPath id="sky"><circle cx="20" cy="20" r="22.500"/></clipPath><g clip-path="url(#sky)"><path d="M-3-3h46v46H-3z" fill="#ffca72"/><circle cx="31" cy="20" r="7" fill="#ff9b39"/><circle cx="10" cy="36" r="22" fill="#8a9fd0"/><path d="M20 16q12 10 20 18l-8 9H10z" fill="#8a9fd0"/></g></svg></a>
  <a href="#" aria-label="Ovladač"><svg viewBox="0 0 40 40"><path d="M0 22V9a9 9 0 0 1 9-9h22a9 9 0 0 1 9 9v13z" fill="#111" stroke="#ddd" stroke-width=".8"/><path d="M6 9v4M9 7v8M12 8v6" stroke="#d9a53c" stroke-width="1.500"/><path d="M15 5v12M18 3v16M21 6v10M24 4v14" stroke="#e8435a" stroke-width="1.500"/><path d="M27 6v10M30 8v6M33 9v4" stroke="#b557d8" stroke-width="1.500"/><rect y="24" width="14" height="17" rx="4" fill="#ddd"/><rect x="16" y="24" width="8" height="17" rx="2" fill="#c6c6c6"/><rect x="26" y="25" width="14" height="16" rx="4" fill="#ccc"/><circle cx="7" cy="31" r="4" fill="#c42222"/><path d="M20 27v11M17.500 31h5" stroke="#444" stroke-width="1.500"/><circle cx="32" cy="36" r="2.500" fill="#444"/><circle cx="36" cy="30" r="2" fill="#444"/></svg></a>
  <a href="#" aria-label="Cloud"><svg viewBox="0 0 40 40"><use href="#tile" fill="#fff"/><path d="M20 29.500H9q-6-1-5-7 1-5 7-5 3-7 10-6 5 0 7 5 9-1 9 7-1 6-7 6-4 0-6-3" fill="none" stroke="#f98410" stroke-width="2.800" stroke-linecap="round"/></svg></a>
  <a href="#" aria-label="SoundCloud"><svg viewBox="0 0 40 40"><use href="#tile" fill="url(#cloudOrange)"/><path d="M20 15.500q7-3 8 3.500 4-.5 4 3 0 3-3 3.500h-9z" fill="#fff"/><path d="M18 16v9.500M15.500 17v8.500M13 18v7.500M10.500 20v5.500M8.500 21v3.500" stroke="#fff" stroke-width="1.300"/></svg></a>
  <hr>
  <a href="#" aria-label="TextEdit"><svg viewBox="0 0 40 40"><use href="#tile" fill="#fdfdfd"/><path d="M0 8h40M0 13h40M0 18h40M0 23h40M0 28h40M0 33h40" stroke="#ccc" stroke-width=".7"/><path d="M7 0v40" stroke="#f3a0a0" stroke-width=".8"/><path d="m35-4 4 1-19 41-4 5 1-7z" fill="#9eb4c4" stroke="#4b5a66" stroke-width=".7"/></svg></a>
  <a href="#" class="large" aria-label="Snímek"><svg viewBox="0 0 50 50"><path d="M2 1h46v48H2z" fill="#1d232b"/><path d="M2 1h14l16 14-9 14-21-2zM34 1h14v20l-10-7zM28 26l10-4 7 14v13H34z" fill="#30363f"/><path d="m2 28 20 1 12-14-10 19-22-4zM37 22l11 18-2 9-3-14z" fill="#1d8af4"/></svg></a>
  <a href="#" aria-label="Asphalt"><svg viewBox="0 0 40 40"><use href="#tile" fill="#e9e7e2"/><path d="M1 30q16-14 38-6v8q-1 8-8 8H9q-8 0-8-10z" fill="#4a3b36"/><path d="M2 21q5-4 14-3 9 2 17 3 5 2 6 7l-5 9q-16 1-24-5-6-3-8-11z" fill="#f2711c"/><path d="m6 22 11-2 12 3-14 3zM18 31l16 1-3 5zM5 27l4 3v4z" fill="#171717"/><rect x="17" y="2" width="6" height="7" fill="#d31b53"/><text x="20" y="15" font-size="6" font-weight="800" text-anchor="middle">ASPHALT</text></svg></a>
  <hr>
  <a href="#" class="box" aria-label="Aplikace"><svg viewBox="0 0 40 40"><path d="M-3 5q0-4 4-4h9l5 4h24q4 0 4 4v8H-3z" fill="#2f9fd8"/><rect x="-3" y="8" width="46" height="32" rx="3" fill="url(#folder)"/><path d="m21 15-8 13M19 15l9 15M11 26h9M24 26h6" stroke="#3f9fd8" stroke-width="2" stroke-linecap="round"/></svg></a>
  <a href="#" aria-label="Stahování"><svg viewBox="0 0 40 40"><path d="M-3 5q0-4 4-4h9l5 4h24q4 0 4 4v8H-3z" fill="#2f9fd8"/><rect x="-3" y="8" width="46" height="32" rx="3" fill="url(#folder)"/><circle cx="20" cy="22.500" r="9" fill="#3a9fdd"/><path d="M20 18v9m-4-4 4 4 4-4" fill="none" stroke="#86d3fa" stroke-width="1.700"/></svg></a>
  <a href="#" aria-label="Okno Finderu"><svg viewBox="0 0 40 40"><path d="M-3 5h46v29H-3z" fill="#fbfbfb"/><path d="M-3 5h8v29h-8z" fill="#e2e2e2"/><path d="M7 12h33" stroke="#3aa1dc" stroke-width="3" stroke-dasharray="3 2"/><path d="M6 32h28" stroke="#aaa" stroke-dasharray="2 3"/><use href="#finder" x="28" y="27" width="16" height="16"/></svg></a>
  <a href="#" aria-label="Okno Finderu"><svg viewBox="0 0 40 40"><path d="M-3 3h46v33H-3z" fill="#fbfbfb"/><path d="M-3 3h8v33h-8z" fill="#e2e2e2"/><path d="M7 9h20" stroke="#777" stroke-width="3" stroke-dasharray="2.500 2"/><use href="#finder" x="28" y="27" width="16" height="16"/></svg></a>
  <a href="#" aria-label="Koš"><svg viewBox="0 0 40 40"><path d="M3 3q6-8 17-6 12-1 17 6l-2 6H5z" fill="#c4c4c2"/><path d="m9 2 3-4 3 4M18 0l4-3 2 5M28 1l3-2 2 4" fill="none" stroke="#37414a" stroke-width="2"/><path d="M2 3q18 5 36 0l-4 34q-1 5-6 5H12q-5 0-6-5z" fill="#e3e4e4"/><path d="m9 10 4 24M19 9l-2 28M31 8l-5 28M12 16l14 8M26 12 14 30" stroke="#d5d7d7" stroke-width="1.500"/></svg></a>
</nav>
</body>
</html>
```
FILE: styles.css
```css
* { box-sizing: border-box; }

body {
  margin: 0;
  height: 100vh;
  display: flex;
  flex-direction: column;
  font: 13px/16px Inter, "DejaVu Sans", sans-serif;
  color: #262626;
  background: linear-gradient(90deg, #12100b 0, #0c110a 25%, #1c2610 45%, #0f0d08 70%, #1f2c12 95%, #2b3a18 100%);
}

button, input, select { font: inherit; color: inherit; }
button { border: 0; padding: 0; margin: 0; background: none; }
h1, h2, h3, ul { margin: 0; padding: 0; font: inherit; list-style: none; }
.defs { position: absolute; width: 0; height: 0; }

/* Menu bar */
.menubar {
  height: 24px;
  flex: none;
  display: flex;
  justify-content: space-between;
  background: linear-gradient(90deg, #f3f0e9, #efeee6 35%, #e9e7e0 65%, #e4dfd7);
  color: #111;
}
.menus {
  display: grid;
  grid-template-columns: 44px 60px 59px 75px 50px 63px 78px 81px 53px 80px;
}
.menus > button { text-align: left; padding-left: 10px; }
.menus > .apple { padding-left: 20px; }
.menus > .apple svg { display: block; }
.menus > .app { font-weight: 700; }
.menus > .opened + button { padding-left: 4px; }
.opened { position: relative; }
.opened > button {
  width: 74px;
  height: 24px;
  text-align: left;
  padding-left: 15px;
  border-radius: 4px;
  background: #d8d5cd;
}
.menu {
  position: absolute;
  z-index: 10;
  top: 25px;
  left: 1px;
  width: 307px;
  padding: 5px;
  border-radius: 6px;
  background: #f0f0f0;
  box-shadow: 0 0 0 1px #c4c4c4, 0 8px 22px rgba(0, 0, 0, .3);
}
.menu button {
  width: 100%;
  height: 22px;
  padding: 0 8px 0 9px;
  display: flex;
  justify-content: space-between;
  align-items: center;
  border-radius: 4px;
  white-space: nowrap;
}
.menu button:disabled { color: #b2b2b2; }
.menu svg { width: 10px; height: 12px; }
.menu .active { background: #479fff; color: #fff; }
.menu kbd { font: inherit; color: #b2b2b2; display: flex; }
.menu .active kbd { color: #fff; }
.menu kbd i { width: 13px; font-style: normal; text-align: center; }
.menu kbd b { width: 11px; font-weight: 400; text-align: right; }
.menu .fn i { font-size: 10px; }
.menu .rule { height: 1px; margin: 5px 9px; background: #d6d6d6; }

.status {
  display: grid;
  align-items: center;
  grid-template-columns: 38px 38px 34px 38px 34px 30px 38px 34px 36px 36px 38px 40px 36px 32px 34px 30px 114px;
}
.status svg { width: 18px; height: 18px; justify-self: center; fill: #1c1c1c; }
.status svg:first-child { width: 22px; }
.status .dim { opacity: .4; }
.status .faint { opacity: .2; }
.status time { padding-left: 8px; white-space: nowrap; }

/* Window */
.window {
  flex: 1;
  min-height: 0;
  margin: 1px 0;
  display: flex;
  flex-direction: column;
  border-radius: 10px;
  overflow: hidden;
  background: #ebebeb;
}
.chrome { flex: none; background: #fafafa; border-bottom: 1px solid #d4d4d4; }
.titlebar { height: 28px; display: grid; grid-template-columns: 1fr auto 1fr; align-items: center; }
.lights { display: flex; gap: 8px; padding-left: 8px; }
.lights button { width: 12px; height: 12px; border-radius: 50%; background: #ff5f57; box-shadow: inset 0 0 0 1px rgba(0, 0, 0, .12); }
.lights button:nth-child(2) { background: #febc2e; }
.lights button:nth-child(3) { background: #28c840; }
.titlebar h1 { display: flex; align-items: center; gap: 5px; padding-left: 4px; font-weight: 700; color: #404040; }
.titlebar h1 span { font-weight: 400; color: #b5b5b5; }
.toolbar { display: flex; justify-content: space-between; padding-right: 5px; font-size: 11px; color: #666; }
.tools { display: grid; }
.tools > * {
  display: grid;
  grid-template-rows: 22px 20px;
  place-items: center;
  white-space: nowrap;
}
.tools > button:disabled { color: #bbb; }
.tools svg { fill: none; stroke: currentColor; stroke-width: 1.200; }
.left { grid-template-columns: 72px 68px 90px; }
.left > button:last-child { padding-left: 9px; grid-template-rows: 20px; align-content: end; justify-content: start; }
.insert { grid-template-columns: 52px 54px 50px 46px 50px 50px 66px; }
.share { grid-template-columns: 50px; }
.right { grid-template-columns: 62px 64px; }
.pressed { width: 62px; height: 22px; display: grid; place-items: center; border-radius: 5px; background: #ececec; color: #444; }
.zoom { display: grid; grid-template-columns: 1fr 20px; width: 65px; height: 22px; border: 1px solid #e6e6e6; border-radius: 5px; align-items: center; font-size: 12px; }
.zoom select { grid-area: 1 / 1 / 2 / 3; appearance: none; border: 0; background: none; padding: 0 0 0 7px; }
.zoom svg { grid-area: 1 / 2; stroke: none; justify-self: center; pointer-events: none; }

.content { flex: 1; min-height: 0; display: flex; }
.canvas { flex: 1; display: flex; padding: 0 262px; background: #ebebeb; }
.page {
  flex: 1;
  display: flex;
  align-items: flex-end;
  justify-content: center;
  padding-bottom: 5px;
  background: #fff;
  box-shadow: 0 0 2px rgba(0, 0, 0, .4);
}
.count {
  width: 156px;
  height: 25px;
  display: grid;
  grid-template-columns: 1fr 18px;
  align-items: center;
  padding: 0 4px 0 8px;
  border: 1px solid #c9c9c9;
  border-radius: 5px;
  background: #ebebeb;
  color: #777;
  font-size: 12px;
}
.count b { color: #000; }
.count svg { color: #333; }

/* Inspector */
.inspector { width: 271px; flex: none; border-left: 1px solid #d0d0d0; background: #f5f5f5; font-size: 12px; }
.inspector h2 { height: 27px; line-height: 26px; font-size: 13px; text-align: center; color: #7d7d7d; border-bottom: 1px solid #dcdcdc; }
.inspector section { margin: 0 16px; padding: 13px 0; border-bottom: 1px solid #dedede; display: grid; gap: 9px; }
.inspector .top { padding: 10px 0; }
.style {
  height: 47px;
  margin: 0 -6px;
  padding: 0 9px 0 5px;
  display: flex;
  align-items: center;
  justify-content: space-between;
  font-size: 13px;
  font-weight: 600;
  color: #000;
  background: #fff;
  border: 1px solid #e3e3e3;
  border-radius: 5px;
}
.style svg { color: #777; }
.inspector .tabs-section { padding: 15px 10px 16px; }
.tabs { height: 22px; display: grid; grid-template-columns: 50px 114px 1fr; border-radius: 6px; background: #e8e8e8; box-shadow: inset 0 0 0 1px #dedede; font-size: 13px; }
.tabs .on { background: #fff; border-radius: 6px; box-shadow: 0 0 1px 1px #ccc; }
.tabs button:last-child { margin: 5px 0; line-height: 12px; border-left: 1px solid #ccc; }
.inspector .font { padding: 14px 0; }
h3 { height: 20px; line-height: 20px; font-weight: 600; }
.row { display: grid; align-items: center; }
.pop, .seg, .gear {
  height: 21px;
  display: grid;
  align-items: center;
  background: #fff;
  border-radius: 5px;
  box-shadow: 0 0 0 1px #e6e6e6, 0 1px 1px #aaa;
}
.pop { grid-template-columns: 1fr 18px; }
.pop select { grid-area: 1 / 1 / 2 / 3; height: 21px; appearance: none; border: 0; background: none; padding: 0 0 0 8px; font-size: 13px; }
.pop svg { grid-area: 1 / 2; pointer-events: none; }
.knob { width: 16px; height: 16px; border-radius: 4px; background: linear-gradient(#ffbd35, #ffa70a); color: #fff; }
.arrow { width: 10px; height: 10px; }
.size { grid-template-columns: 159px 1fr 13px; column-gap: 3px; }
.inspector input:not([type]) {
  height: 20px;
  min-width: 0;
  border: 1px solid #e3e3e3;
  border-bottom-color: #aaa;
  background: #fff;
  padding: 0 3px;
  text-align: right;
  font-size: 13px;
  color: #000;
}
.inspector .size input { width: 44px; justify-self: end; }
.step { width: 13px; height: 21px; display: grid; border-radius: 6px; background: #fff; box-shadow: 0 0 0 1px #e3e3e3, 0 1px 1px #aaa; }
.step button:first-child { grid-area: 1 / 1; border-bottom: 1px solid #ddd; }
.step button:nth-child(2) { grid-area: 2 / 1; }
.step svg { grid-area: 1 / 1 / 3 / 2; width: 9px; height: 17px; place-self: center; pointer-events: none; }
.bius { grid-template-columns: 159px 60px; justify-content: space-between; }
.seg { grid-template-columns: repeat(4, 1fr); }
.seg.two { grid-template-columns: 1fr 1fr; }
.seg button { height: 13px; line-height: 13px; display: grid; place-items: center; font-size: 12px; }
.seg button + button { border-left: 1px solid #ddd; }
.seg i { font-family: "Liberation Mono", monospace; font-size: 13px; }
.seg svg { width: 13px; height: 12px; fill: none; stroke: #222; stroke-width: 1.300; }
.seg.two svg { width: 15px; }
.seg button:disabled svg { stroke: #bbb; }
.seg button.on { height: 21px; border-radius: 5px 0 0 5px; background: linear-gradient(#ffb72e, #ffa60a); }
.seg button.on svg { stroke: #fff; }
.seg button.on + button { border: 0; }
.gear { display: flex; justify-content: center; gap: 1px; }
.chars { grid-template-columns: 71px 1fr; }
.color .row { grid-template-columns: 1fr 64px; padding-right: 1px; }
.plain { text-align: left; display: flex; gap: 3px; align-items: center; }
.well { height: 21px; display: grid; grid-template-columns: 44px 20px; border-radius: 5px; overflow: hidden; background: #fff; box-shadow: 0 0 0 1px #ddd; }
.well::before { content: ""; height: 21px; background: #000; }
.well span { width: 14px; height: 14px; border-radius: 50%; place-self: center; background: radial-gradient(#fff, transparent 75%), conic-gradient(#f66, #f6d, #66f, #6ef, #6f6, #ff6, #f66); }
.inspector .align { padding: 14px 2px 14px 0; gap: 8px; }
.fold { display: flex; align-items: center; gap: 5px; font-weight: 600; white-space: nowrap; }
.fold svg { width: 10px; height: 12px; color: #b0b0b0; }
.spacing .row { grid-template-columns: 1fr 125px; }
.lists .row { grid-template-columns: 1fr 100px; }
.inspector .lists { padding-bottom: 11px; }
.indent { display: grid; grid-template-columns: 57px 60px 20px 60px 13px; grid-template-rows: 21px 16px; column-gap: 3px; padding-left: 16px; align-items: center; }
.indent > span:first-child { white-space: nowrap; }
.indent label { grid-row: 2; font-size: 11px; text-align: center; }
.indent .first { grid-column: 2; }
.indent .second { grid-column: 4; }
.inspector .initial { padding: 8px 0; }
.initial .row { grid-template-columns: 1fr 65px; }
.initial label { display: flex; align-items: center; gap: 8px; font-weight: 500; }
.initial input { appearance: none; width: 14px; height: 14px; margin: 0; background: #fff; border: 1px solid #c8c8c8; border-radius: 3px; }
.initial button { height: 32px; display: flex; justify-content: space-between; align-items: center; padding: 0 5px 0 8px; border: 1px solid #dcdcdc; border-radius: 5px; background: #fff; }

/* Dock */
.dock {
  position: relative;
  flex: none;
  height: 65px;
  margin: 0 46px 5px 45px;
  padding: 0 2px 0 3px;
  display: flex;
  border-radius: 17px;
  background: linear-gradient(90deg, #66625d, #5e6357 15%, #616557 28%, #7b7257 36%, #68655a 45%, #69635b 51%, #5b655a 56%, #756e59 62%, #6b6359 70%, #5f7857 77%, #726e5b 85%, #776c60);
  box-shadow: inset 0 0 0 1px rgba(255, 255, 255, .25), 0 0 60px rgba(0, 0, 0, .28);
}
.dock a {
  position: relative;
  flex: 1;
  display: grid;
  grid-template-rows: 60px;
  place-items: center;
  align-content: start;
}
.dock svg { width: 40px; height: 40px; overflow: visible; }
.dock .large svg { width: 50px; height: 50px; }
.dock hr { width: 24px; margin: 9px 0; border: 0; background: linear-gradient(#44413a, #44413a) center / 1px 100% no-repeat; }
.dock a b {
  position: absolute;
  top: 5px;
  right: 4px;
  min-width: 18px;
  height: 18px;
  border-radius: 9px;
  background: #f8413a;
  color: #fff;
  font-size: 11px;
  font-weight: 500;
  line-height: 18px;
  text-align: center;
}
.run::after, .box::after { content: ""; position: absolute; top: 59px; width: 4px; height: 4px; border-radius: 50%; background: #000; }
.box::after { width: 49px; border-radius: 1px; border: 1px solid #000; background: none; }
```
